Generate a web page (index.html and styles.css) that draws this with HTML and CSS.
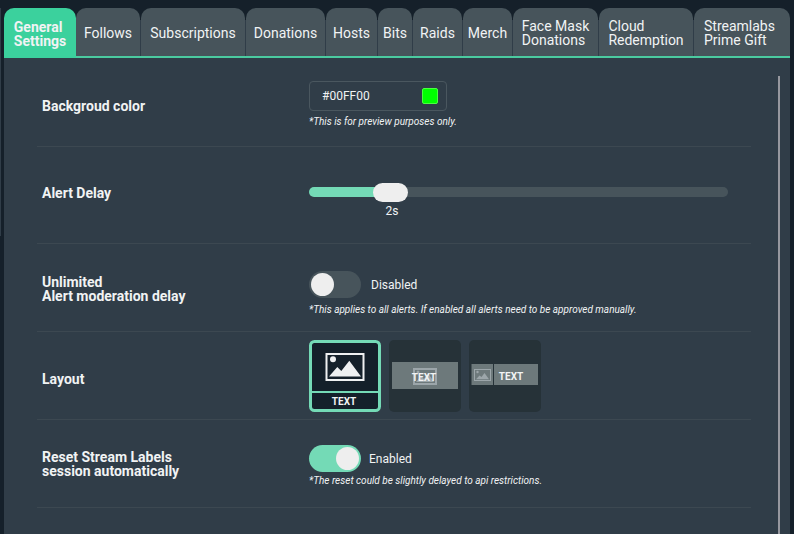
FILE: index.html
```html
<!DOCTYPE html>
<html lang="en">
<head>
<meta charset="utf-8">
<meta name="viewport" content="width=device-width, initial-scale=1">
<title>Alert Box Settings</title>
<link rel="stylesheet" href="styles.css">
</head>
<body>
<div class="app">
  <div class="rail"></div>
  <main class="window">
    <nav class="tabs">
      <button class="tab tab-active" type="button"><span>General<br>Settings</span></button>
      <button class="tab" type="button">Follows</button>
      <button class="tab" type="button">Subscriptions</button>
      <button class="tab" type="button">Donations</button>
      <button class="tab" type="button">Hosts</button>
      <button class="tab" type="button">Bits</button>
      <button class="tab" type="button">Raids</button>
      <button class="tab" type="button">Merch</button>
      <button class="tab" type="button"><span>Face Mask<br>Donations</span></button>
      <button class="tab" type="button"><span>Cloud<br>Redemption</span></button>
      <button class="tab" type="button"><span>Streamlabs<br>Prime Gift</span></button>
    </nav>
    <div class="panel">
      <form class="settings">
        <div class="row row-color">
          <label class="name" for="bg-color">Backgroud color</label>
          <div class="control">
            <div class="color-field">
              <input class="color-text" id="bg-color" type="text" value="#00FF00">
              <input class="swatch" type="color" value="#00ff00" aria-label="Pick background color">
            </div>
            <p class="note">*This is for preview purposes only.</p>
          </div>
        </div>
        <div class="row row-delay">
          <label class="name" for="delay">Alert Delay</label>
          <div class="control">
            <input class="slider" id="delay" type="range" min="0" max="12" value="2">
            <output class="slider-value" for="delay">2s</output>
          </div>
        </div>
        <div class="row row-moderation">
          <label class="name" for="moderation">Unlimited<br>Alert moderation delay</label>
          <div class="control">
            <div class="toggle-line">
              <input class="toggle" id="moderation" type="checkbox">
              <span>Disabled</span>
            </div>
            <p class="note">*This applies to all alerts. If enabled all alerts need to be approved manually.</p>
          </div>
        </div>
        <div class="row row-layout">
          <span class="name" id="layout-name">Layout</span>
          <div class="control layouts" role="radiogroup" aria-labelledby="layout-name">
            <label class="layout">
              <input class="layout-radio" type="radio" name="layout" aria-label="Image above text" checked>
              <svg class="layout-art" viewBox="0 0 72 72">
                <rect x="1.5" y="1.5" width="69" height="69" rx="4" fill="#14202a" stroke="#74dab6" stroke-width="3"/>
                <path d="M2 52H70" stroke="#74dab6" stroke-width="2"/>
                <rect x="17.5" y="14" width="37" height="26" fill="none" stroke="#eef0f1" stroke-width="2"/>
                <circle cx="24" cy="19.300" r="3" fill="#eef0f1"/>
                <path d="M20 36.500L28.300 27L32.300 31L40.300 20.700L52 36.500Z" fill="#eef0f1"/>
                <text class="art-text" x="35" y="65">TEXT</text>
              </svg>
            </label>
            <label class="layout">
              <input class="layout-radio" type="radio" name="layout" aria-label="Text over image">
              <svg class="layout-art" viewBox="0 0 72 72">
                <rect width="72" height="72" rx="5" fill="#263238"/>
                <rect x="3" y="22" width="66" height="27" fill="#6d797b"/>
                <rect x="25" y="29" width="22" height="15" fill="none" stroke="#9ca6aa" stroke-width="2"/>
                <circle cx="29" cy="32" r="1.500" fill="#9ca6aa"/>
                <path d="M27 42L32 36L35 39L39 33L45 42Z" fill="#9ca6aa"/>
                <text class="art-text" x="35" y="41">TEXT</text>
              </svg>
            </label>
            <label class="layout">
              <input class="layout-radio" type="radio" name="layout" aria-label="Image beside text">
              <svg class="layout-art" viewBox="0 0 72 72">
                <rect width="72" height="72" rx="5" fill="#263238"/>
                <rect x="2.500" y="24" width="21.500" height="21" fill="#6d797b"/>
                <rect x="25" y="24" width="44" height="21" fill="#6d797b"/>
                <rect x="5.500" y="29.500" width="16" height="11" fill="none" stroke="#9ca6aa"/>
                <circle cx="8.500" cy="32" r="1.200" fill="#9ca6aa"/>
                <path d="M7 39.300L10.500 35.500L12.500 37L15.500 33L20 39.300Z" fill="#9ca6aa"/>
                <text class="art-text" x="42" y="40">TEXT</text>
              </svg>
            </label>
          </div>
        </div>
        <div class="row row-reset">
          <label class="name" for="reset">Reset Stream Labels<br>session automatically</label>
          <div class="control">
            <div class="toggle-line toggle-line-on">
              <input class="toggle" id="reset" type="checkbox" checked>
              <span>Enabled</span>
            </div>
            <p class="note">*The reset could be slightly delayed to api restrictions.</p>
          </div>
        </div>
      </form>
      <div class="scrollbar"></div>
    </div>
  </main>
</div>
</body>
</html>
```
FILE: styles.css
```css
* {
  box-sizing: border-box;
}

body {
  margin: 0;
  background: #15202a;
  color: #f1f3f4;
  font: 12px/14px Roboto, sans-serif;
}

.app {
  display: flex;
  gap: 3px;
  min-height: 100vh;
  padding: 8px 4px 0 0;
}

.rail {
  width: 1px;
  height: 228px;
  background: #303d48;
}

.window {
  display: flex;
  flex: 1;
  flex-direction: column;
  min-width: 0;
}

/* Column shares follow the length of each tab's title. */
.tabs {
  display: grid;
  grid-template-columns: 72fr 65fr 105fr 80fr 52fr 35fr 50fr 50fr 86fr 95fr 96fr;
  background: linear-gradient(transparent 12px, #303d48 12px);
  border-bottom: 2px solid #4bcba0;
}

.tab {
  display: flex;
  align-items: center;
  justify-content: center;
  min-width: 0;
  height: 48px;
  margin: 0 1px 0 0;
  padding: 2px 0 0;
  border: 0;
  border-radius: 10px 10px 0 0;
  background: #47545b;
  color: #f1f3f4;
  font: 14px/14px Roboto, sans-serif;
  text-align: left;
  white-space: nowrap;
}

.tab:last-child {
  margin: 0;
  padding-right: 5px;
}

.tab-active {
  height: 50px;
  margin: 0 0 -2px;
  background: #3bd19d;
  font-weight: 700;
}

.panel {
  display: flex;
  flex: 1;
  gap: 27px;
  padding: 0 10px 0 33px;
  background: #303d48;
}

.settings {
  flex: 1;
  min-width: 0;
}

.scrollbar {
  width: 2px;
  margin-top: 18px;
  background: #96979e;
}

.row {
  display: grid;
  grid-template-columns: 267px 1fr;
  min-height: 88px;
  padding: 0 23px 0 5px;
  border-bottom: 1px solid #3c4851;
}

.name {
  align-self: center;
  font-size: 14px;
  font-weight: 700;
}

.note {
  margin: 4px 0 0;
  font-size: 10px;
  font-style: italic;
}

.row-color {
  min-height: 89px;
}

.row-color .name {
  padding-top: 8px;
}

.row-color .control {
  padding-top: 23px;
}

.color-field {
  display: flex;
  align-items: center;
  width: 138px;
  height: 30px;
  padding: 0 8px 0 12px;
  border: 1px solid #4a575f;
  border-radius: 4px;
}

.color-text {
  flex: 1;
  min-width: 0;
  padding: 0;
  border: 0;
  background: none;
  color: inherit;
  font: inherit;
}

.swatch {
  width: 16px;
  height: 16px;
  padding: 0;
  border: 0;
  background: none;
  appearance: none;
}

.swatch::-webkit-color-swatch-wrapper {
  padding: 0;
}

.swatch::-webkit-color-swatch {
  border: 1px solid #4bff41;
  border-radius: 2px;
}

.row-delay {
  min-height: 97px;
}

.row-delay .name {
  margin-top: -4px;
}

.row-delay .control {
  padding-top: 36px;
}

.slider {
  display: block;
  width: 100%;
  height: 18px;
  margin: 0;
  background: none;
  appearance: none;
}

.slider::-webkit-slider-runnable-track {
  height: 10px;
  border-radius: 5px;
  background: linear-gradient(to right, #74dab6 20%, #47545b 20%);
}

.slider::-webkit-slider-thumb {
  width: 35px;
  height: 19px;
  margin-top: -4px;
  border-radius: 10px;
  background: #eeeeee;
  appearance: none;
}

/* Centred under the thumb at 2 of 12. */
.slider-value {
  display: block;
  width: 35px;
  margin: 3px 0 0 calc((100% - 35px) / 6);
  padding-left: 3px;
  text-align: center;
}

.row-moderation .name {
  padding-top: 2px;
}

.row-moderation .control {
  padding-top: 27px;
}

.row-moderation .note {
  margin-top: 5px;
}

.row-reset .control {
  padding-top: 25px;
}

.toggle-line {
  display: flex;
  align-items: center;
  gap: 10px;
}

.toggle-line-on {
  gap: 8px;
}

.toggle-line-on + .note {
  margin-top: 2px;
}

.toggle {
  display: flex;
  align-items: center;
  width: 52px;
  height: 27px;
  margin: 0;
  padding: 0 2px;
  border-radius: 14px;
  background: #47545b;
  appearance: none;
}

.toggle::before {
  width: 23px;
  height: 23px;
  border-radius: 50%;
  background: #eeeeee;
  content: "";
}

.toggle:checked {
  justify-content: flex-end;
  background: #74dab6;
}

.row-layout .name {
  padding-top: 6px;
}

.layouts {
  display: flex;
  gap: 8px;
  padding-top: 8px;
}

.layout {
  position: relative;
  width: 72px;
  height: 72px;
}

.layout-radio {
  position: absolute;
  inset: 0;
  margin: 0;
  appearance: none;
}

.layout-art {
  display: block;
  width: 100%;
}

.art-text {
  fill: #f1f3f4;
  font-size: 10px;
  font-weight: 700;
  text-anchor: middle;
}
```
